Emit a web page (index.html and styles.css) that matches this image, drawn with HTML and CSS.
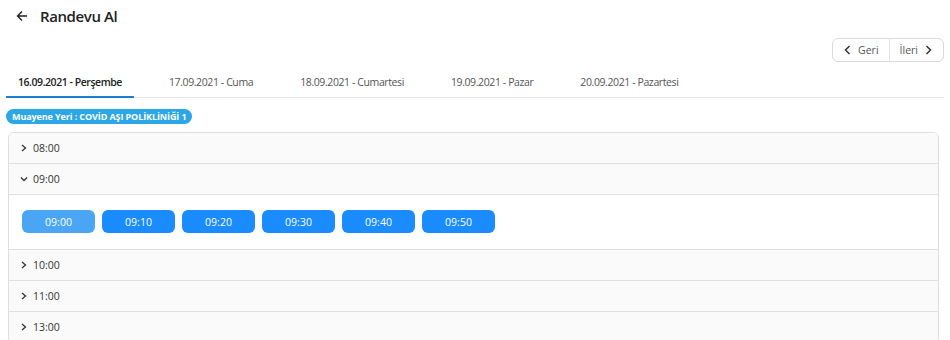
FILE: index.html
```html
<!DOCTYPE html>
<html lang="tr">
<head>
    <meta charset="UTF-8">
    <meta name="viewport" content="width=device-width, initial-scale=1.0">
    <title>Randevu Al</title>
    <link rel="stylesheet" href="styles.css">
</head>
<body>
    <section class="page">
        <div class="header">
            <a href="#" class="back">
                <svg width="12" height="12" viewBox="0 0 12 12"><path d="M11 6H1.5M6 1.5L1.5 6L6 10.5" fill="none" stroke="#222" stroke-width="1.4"/></svg>
            </a>
            <h1 class="title">Randevu Al</h1>
        </div>

        <div class="pager">
            <div class="btn-group">
                <a href="#" class="pager-btn">
                    <svg width="9" height="10" viewBox="0 0 9 10"><path d="M6.5 1L2.5 5L6.5 9" fill="none" stroke="#333" stroke-width="1.5"/></svg>
                    Geri
                </a>
                <a href="#" class="pager-btn">
                    İleri
                    <svg width="9" height="10" viewBox="0 0 9 10"><path d="M2.5 1L6.5 5L2.5 9" fill="none" stroke="#333" stroke-width="1.5"/></svg>
                </a>
            </div>
        </div>

        <ul class="tabs">
            <li class="tab active">16.09.2021 - Perşembe</li>
            <li class="tab">17.09.2021 - Cuma</li>
            <li class="tab">18.09.2021 - Cumartesi</li>
            <li class="tab">19.09.2021 - Pazar</li>
            <li class="tab">20.09.2021 - Pazartesi</li>
        </ul>

        <span class="badge">Muayene Yeri : COVİD AŞI POLİKLİNİĞİ 1</span>

        <div class="accordion">
            <div class="acc-row">
                <svg class="chev" width="8" height="8" viewBox="0 0 8 8"><path d="M2 1L5.5 4L2 7" fill="none" stroke="#333" stroke-width="1.3"/></svg>
                08:00
            </div>
            <div class="acc-row">
                <svg class="chev" width="8" height="8" viewBox="0 0 8 8"><path d="M1 2.5L4 5.5L7 2.5" fill="none" stroke="#333" stroke-width="1.3"/></svg>
                09:00
            </div>
            <div class="acc-panel">
                <button class="slot current">09:00</button>
                <button class="slot">09:10</button>
                <button class="slot">09:20</button>
                <button class="slot">09:30</button>
                <button class="slot">09:40</button>
                <button class="slot">09:50</button>
            </div>
            <div class="acc-row">
                <svg class="chev" width="8" height="8" viewBox="0 0 8 8"><path d="M2 1L5.5 4L2 7" fill="none" stroke="#333" stroke-width="1.3"/></svg>
                10:00
            </div>
            <div class="acc-row">
                <svg class="chev" width="8" height="8" viewBox="0 0 8 8"><path d="M2 1L5.5 4L2 7" fill="none" stroke="#333" stroke-width="1.3"/></svg>
                11:00
            </div>
            <div class="acc-row">
                <svg class="chev" width="8" height="8" viewBox="0 0 8 8"><path d="M2 1L5.5 4L2 7" fill="none" stroke="#333" stroke-width="1.3"/></svg>
                13:00
            </div>
        </div>
    </section>
</body>
</html>
```

FILE: styles.css
```css
* {
    margin: 0;
    padding: 0;
    box-sizing: border-box;
}
body {
    font-family: "Open Sans", "Noto Sans", sans-serif;
    color: #333;
    background: #fff;
}
.page {
    padding: 0 6px 0 6px;
}
.header {
    display: flex;
    align-items: center;
    height: 32px;
    padding-left: 10px;
}
.back {
    display: flex;
    width: 24px;
}
.title {
    font-size: 15px;
    font-weight: 600;
    color: #222;
    letter-spacing: -0.4px;
}
.pager {
    display: flex;
    justify-content: flex-end;
    margin-top: 6px;
}
.btn-group {
    display: flex;
    height: 24px;
    border: 1px solid #d9d9d9;
    border-radius: 6px;
}
.pager-btn {
    display: flex;
    align-items: center;
    gap: 6px;
    padding: 0 10px;
    font-size: 10.5px;
    color: #555;
    text-decoration: none;
}
.pager-btn + .pager-btn {
    border-left: 1px solid #e3e3e3;
}
.tabs {
    display: flex;
    list-style: none;
    border-bottom: 1px solid #e8e8e8;
    margin-top: 5px;
}
.tab {
    padding: 8px 12px 7px 12px;
    margin-right: 23px;
    font-size: 10.5px;
    color: #555;
    letter-spacing: -0.4px;
    border-bottom: 2px solid transparent;
    margin-bottom: -1px;
}
.tab.active {
    color: #222;
    font-weight: 600;
    letter-spacing: -0.45px;
    border-bottom-color: #1a7fd4;
}
.badge {
    display: inline-block;
    margin-top: 11px;
    padding: 0 6px;
    height: 15px;
    line-height: 15px;
    border-radius: 8px;
    background: #2ba6e6;
    color: #fff;
    font-size: 9px;
    font-weight: 700;
    letter-spacing: -0.1px;
}
.accordion {
    margin: 7px 5px 0 2px;
    border: 1px solid #dedede;
    border-radius: 6px;
    overflow: hidden;
}
.acc-row {
    display: flex;
    align-items: center;
    gap: 5px;
    height: 31px;
    padding-left: 11px;
    background: #fafafa;
    font-size: 10.5px;
    color: #333;
    border-bottom: 1px solid #e0e0e0;
}
.acc-panel {
    display: flex;
    gap: 7px;
    padding: 15px 13px 16px 13px;
    background: #fff;
    border-bottom: 1px solid #e0e0e0;
}
.slot {
    width: 73px;
    height: 23px;
    border: none;
    border-radius: 6px;
    background: #1a8cff;
    color: #fff;
    font-family: inherit;
    font-size: 10.5px;
}
.slot.current {
    background: #4aa6f5;
}
```
